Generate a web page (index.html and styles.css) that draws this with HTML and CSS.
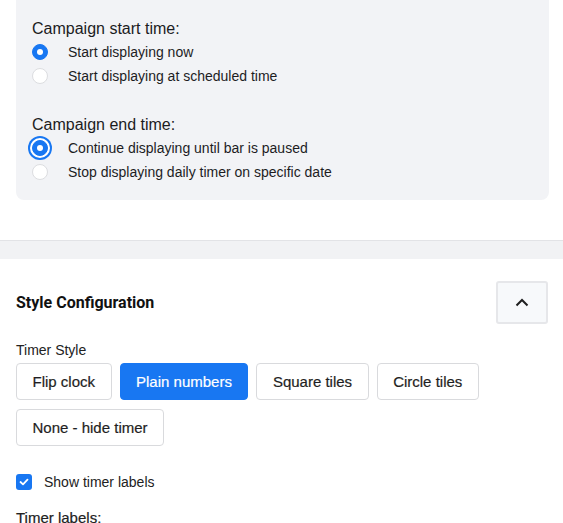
FILE: index.html
```html
<!DOCTYPE html>
<html lang="en">
<head>
  <meta charset="UTF-8">
  <title>Campaign Settings</title>
  <link rel="stylesheet" href="styles.css">
</head>
<body>
  <div class="timing-card">
    <div class="field-group">
      <h3>Campaign start time:</h3>
      <label class="radio-row">
        <span class="radio checked"></span>
        Start displaying now
      </label>
      <label class="radio-row">
        <span class="radio"></span>
        Start displaying at scheduled time
      </label>
    </div>

    <div class="field-group">
      <h3>Campaign end time:</h3>
      <label class="radio-row">
        <span class="radio checked focused"></span>
        Continue displaying until bar is paused
      </label>
      <label class="radio-row">
        <span class="radio"></span>
        Stop displaying daily timer on specific date
      </label>
    </div>
  </div>

  <div class="section-gap"></div>

  <section class="style-section">
    <div class="section-header">
      <h2>Style Configuration</h2>
      <button class="collapse-btn" type="button">
        <svg width="14" height="9" viewBox="0 0 14 9">
          <path d="M1.5 7.5 L7 2 L12.5 7.5" fill="none" stroke="#1f1f1f" stroke-width="2"/>
        </svg>
      </button>
    </div>

    <div class="field-label">Timer Style</div>
    <div class="style-options">
      <button class="option">Flip clock</button>
      <button class="option active">Plain numbers</button>
      <button class="option">Square tiles</button>
      <button class="option">Circle tiles</button>
      <button class="option">None - hide timer</button>
    </div>

    <label class="check-row">
      <span class="checkbox">
        <svg width="10" height="8" viewBox="0 0 10 8">
          <path d="M1.5 4 L4 6.3 L8.5 1.7" fill="none" stroke="#fff" stroke-width="1.8" stroke-linecap="round" stroke-linejoin="round"/>
        </svg>
      </span>
      Show timer labels
    </label>

    <div class="field-label strong">Timer labels:</div>
  </section>
</body>
</html>
```

FILE: styles.css
```css
body {
  margin: 0;
  background: #fff;
  font-family: "Liberation Sans", Arial, sans-serif;
  color: #1c1c1e;
  overflow: hidden;
}

.timing-card {
  margin: 0 14px 0 16px;
  padding: 19px 16px 17px;
  background: #f2f3f6;
  border-radius: 0 0 8px 8px;
  height: 164px;
}

.field-group {
  margin-bottom: 27px;
}

.field-group h3 {
  margin: 0 0 2px;
  font-size: 16px;
  font-weight: 400;
  line-height: 19px;
}

.radio-row {
  display: flex;
  align-items: center;
  height: 24px;
  font-size: 14px;
  color: #1d1d1f;
}

.radio {
  position: relative;
  width: 14px;
  height: 14px;
  margin-right: 20px;
  border: 1px solid #dcdde0;
  border-radius: 50%;
  background: #fff;
}

.radio.checked {
  border-color: #1877f2;
  background: #1877f2;
}

.radio.checked::after {
  content: "";
  position: absolute;
  left: 4px;
  top: 4px;
  width: 6px;
  height: 6px;
  border-radius: 50%;
  background: #fff;
}

.radio.focused {
  box-shadow: 0 0 0 2px #fff, 0 0 0 4px #1877f2;
}

.section-gap {
  height: 40px;
  border-bottom: 1px solid #e2e3e6;
}

.style-section {
  margin-top: 18px;
  padding: 22px 15px 0 16px;
  background: #fff;
  box-shadow: 0 -18px 0 #f1f2f4;
}

.section-header {
  display: flex;
  align-items: center;
  justify-content: space-between;
  margin-bottom: 18px;
}

.section-header h2 {
  margin: 0;
  font-family: Roboto, "Liberation Sans", sans-serif;
  font-size: 16px;
  font-weight: 700;
  color: #111;
}

.collapse-btn {
  width: 52px;
  height: 43px;
  display: flex;
  align-items: center;
  justify-content: center;
  background: #f7f9fb;
  border: 2px solid #e6e7ea;
  border-radius: 3px;
  cursor: pointer;
}

.field-label {
  font-size: 14px;
  color: #222;
  margin-bottom: 5px;
}

.field-label.strong {
  font-size: 15px;
  -webkit-text-stroke: 0.2px #222;
}

.style-options {
  display: flex;
  flex-wrap: wrap;
  gap: 9px 8px;
  max-width: 480px;
  margin-bottom: 28px;
}

.option {
  height: 37px;
  padding: 0 15.5px;
  font-family: "Liberation Sans", Arial, sans-serif;
  font-size: 15px;
  color: #1f1f23;
  -webkit-text-stroke: 0.2px #1f1f23;
  background: #fff;
  border: 1px solid #d9dadd;
  border-radius: 4px;
  cursor: pointer;
}

.option.active {
  background: #1877f2;
  border-color: #1877f2;
  color: #fff;
  -webkit-text-stroke-color: #fff;
}

.check-row {
  display: flex;
  align-items: center;
  font-size: 14px;
  color: #222;
  margin-bottom: 19px;
}

.checkbox {
  width: 16px;
  height: 16px;
  margin-right: 12px;
  border-radius: 3px;
  background: #1877f2;
  display: flex;
  align-items: center;
  justify-content: center;
}
```
